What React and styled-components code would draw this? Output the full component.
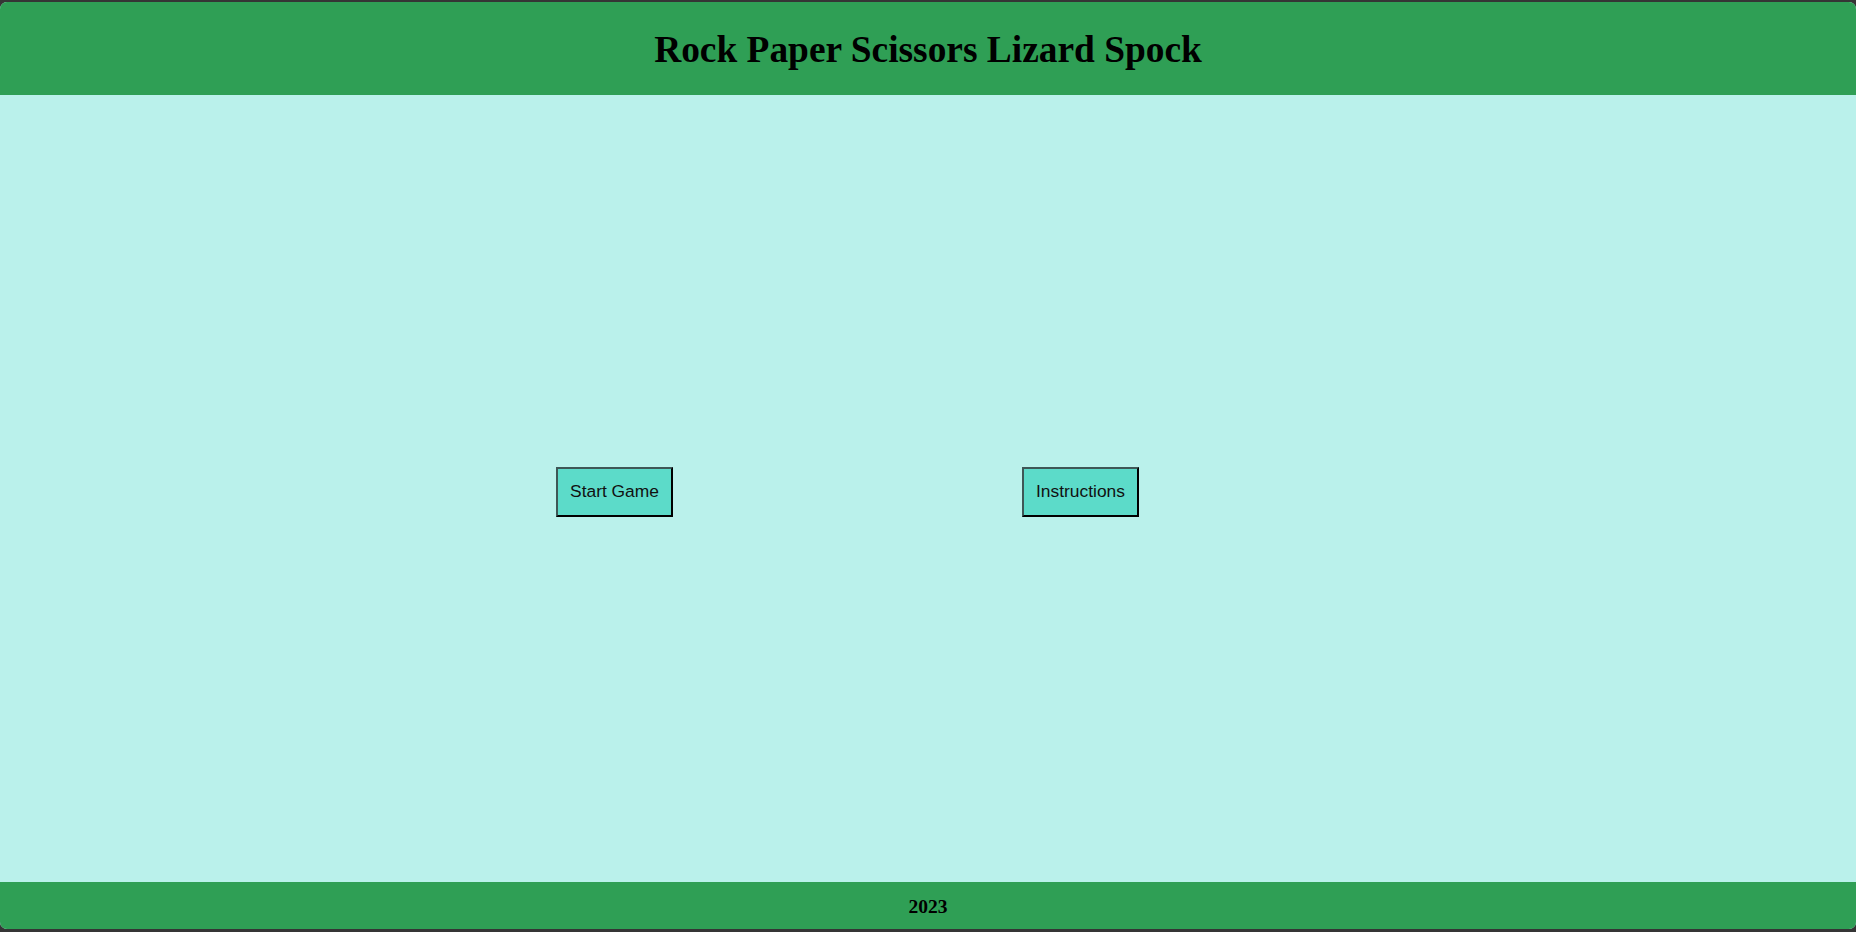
import React from 'react'
import styled, { createGlobalStyle } from 'styled-components'

const GlobalStyle = createGlobalStyle`
  html, body {
    margin: 0;
    padding: 0;
    height: 100%;
    background: #353535;
  }
  #root {
    height: 100%;
  }
`

const Page = styled.div`
  height: calc(100vh - 5px);
  margin-top: 2px;
  display: flex;
  flex-direction: column;
  border-radius: 7px;
  overflow: hidden;
  background: #baf1eb;
`

const Header = styled.header`
  height: 93px;
  flex: none;
  background: #2f9f55;
  display: flex;
  align-items: center;
  justify-content: center;
  h1 {
    margin: 0;
    font-family: "Liberation Serif", "Times New Roman", serif;
    font-weight: bold;
    font-size: 37.4px;
    color: #000;
    padding-top: 1px;
  }
`

const Main = styled.main`
  flex: 1;
  display: flex;
  align-items: center;
  padding: 6px 0 0 556px;
  gap: 349px;
`

const Button = styled.button`
  box-sizing: border-box;
  width: 117px;
  height: 50px;
  padding: 0;
  background: #5cdbc9;
  color: #111;
  font-family: "Liberation Sans", Arial, sans-serif;
  font-size: 17.4px;
  border: 2px solid;
  border-color: #3e5756 #000 #000 #3e5756;
  cursor: pointer;
`

const Footer = styled.footer`
  height: 47px;
  flex: none;
  background: #2f9f55;
  display: flex;
  align-items: center;
  justify-content: center;
  padding-top: 2px;
  box-sizing: border-box;
  font-family: "Liberation Serif", "Times New Roman", serif;
  font-weight: bold;
  font-size: 19.5px;
  color: #000;
`

export default function App() {
  return (
    <>
      <GlobalStyle />
      <Page>
        <Header>
          <h1>Rock Paper Scissors Lizard Spock</h1>
        </Header>
        <Main>
          <Button>Start Game</Button>
          <Button>Instructions</Button>
        </Main>
        <Footer>2023</Footer>
      </Page>
    </>
  )
}
